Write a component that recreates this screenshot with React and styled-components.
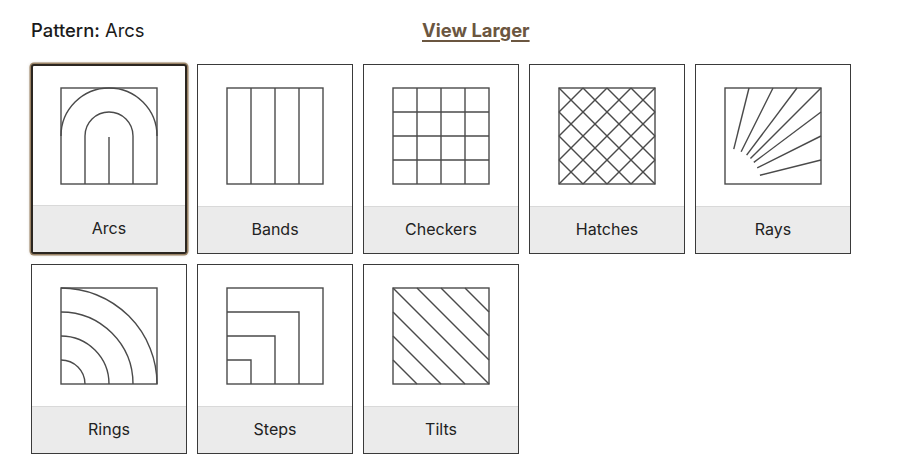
import React from "react";
import styled, { createGlobalStyle, css } from "styled-components";

const Global = createGlobalStyle`
  html, body { margin: 0; padding: 0; background: #fff; }
  body { font-family: Inter, "Noto Sans", "Liberation Sans", sans-serif; color: #1f1f1f; }
`;

const Page = styled.div`
  padding: 0 0 0 31px;
`;

const Header = styled.div`
  display: flex;
  align-items: center;
  height: 58px;
  margin-bottom: 6px;
`;

const Title = styled.div`
  width: 391px;
  font-size: 18.4px;
  color: #1a1a1a;
  padding-top: 1px;
`;

const TitleKey = styled.span`
  font-weight: 500;
`;

const ViewLink = styled.a`
  font-size: 18.4px;
  font-weight: 700;
  color: #6b5640;
  text-decoration: underline;
  text-decoration-thickness: 2px;
  text-underline-offset: 3px;
  cursor: pointer;
  padding-top: 1px;
`;

const Grid = styled.div`
  display: grid;
  grid-template-columns: repeat(5, 156px);
  column-gap: 10px;
  row-gap: 10px;
`;

const Card = styled.div`
  box-sizing: border-box;
  width: 156px;
  height: 190px;
  display: flex;
  flex-direction: column;
  border: 1px solid #3a3a3a;
  background: #fff;
  ${(p) =>
    p.$selected &&
    css`
      border: 2px solid #2b2620;
      border-radius: 3px;
      box-shadow: 0 0 0 1.5px #9a8366, 0 0 3px 1px rgba(120, 95, 60, 0.35);
    `}
`;

const Preview = styled.div`
  flex: 1;
  display: flex;
  align-items: center;
  justify-content: center;
`;

const Label = styled.div`
  box-sizing: border-box;
  height: 47px;
  padding-bottom: 2px;
  border-top: 1px solid #d9d9d9;
  background: #ebebeb;
  display: flex;
  align-items: center;
  justify-content: center;
  font-size: 16px;
  color: #222;
`;

const S = { fill: "none", stroke: "#4a4a4a", strokeWidth: 1.4 };

const Icon = ({ children }) => (
  <svg width="98" height="98" viewBox="-1 -1 98 98">
    <g {...S}>
      {children}
      <rect x="0" y="0" width="96" height="96" />
    </g>
  </svg>
);

const lines = (arr) => arr.map((l, i) => <line key={i} x1={l[0]} y1={l[1]} x2={l[2]} y2={l[3]} />);

const clipLine = (c, dir) => {
  // dir 1: x - y = c ; dir -1: x + y = c, clipped to 0..96
  const pts = [];
  for (let x = 0; x <= 96; x += 0.5) {
    const y = dir === 1 ? x - c : c - x;
    if (y >= 0 && y <= 96) pts.push([x, y]);
  }
  if (pts.length < 2) return null;
  const a = pts[0];
  const b = pts[pts.length - 1];
  return [a[0], a[1], b[0], b[1]];
};

const icons = {
  Arcs: (
    <Icon>
      <path d="M0 48 A48 48 0 0 1 96 48" />
      <path d="M24 96 V48 A24 24 0 0 1 72 48 V96" />
      <line x1="48" y1="49" x2="48" y2="96" />
    </Icon>
  ),
  Bands: <Icon>{lines([[24, 0, 24, 96], [48, 0, 48, 96], [72, 0, 72, 96]])}</Icon>,
  Checkers: (
    <Icon>
      {lines([
        [24, 0, 24, 96], [48, 0, 48, 96], [72, 0, 72, 96],
        [0, 24, 96, 24], [0, 48, 96, 48], [0, 72, 96, 72],
      ])}
    </Icon>
  ),
  Hatches: (
    <Icon>
      {lines(
        [-72, -48, -24, 0, 24, 48, 72]
          .map((c) => clipLine(c, 1))
          .concat([24, 48, 72, 96, 120, 144, 168].map((c) => clipLine(c, -1)))
          .filter(Boolean)
      )}
    </Icon>
  ),
  Rays: (
    <Icon>
      {lines(
        [[24, 0], [48, 0], [72, 0], [96, 0], [96, 24], [96, 48], [96, 72]].map(([x, y]) => {
          const dx = x;
          const dy = y - 96;
          const len = Math.hypot(dx, dy);
          const r = 36;
          return [(dx / len) * r, 96 + (dy / len) * r, x, y];
        })
      )}
    </Icon>
  ),
  Rings: (
    <Icon>
      <path d="M0 72 A24 24 0 0 1 24 96" />
      <path d="M0 48 A48 48 0 0 1 48 96" />
      <path d="M0 24 A72 72 0 0 1 72 96" />
      <path d="M0 0 A96 96 0 0 1 96 96" />
    </Icon>
  ),
  Steps: (
    <Icon>
      <path d="M0 24 H72 V96" />
      <path d="M0 48 H48 V96" />
      <path d="M0 72 H24 V96" />
    </Icon>
  ),
  Tilts: (
    <Icon>
      {lines([-72, -48, -24, 0, 24, 48, 72].map((c) => clipLine(c, 1)).filter(Boolean))}
    </Icon>
  ),
};

const patterns = ["Arcs", "Bands", "Checkers", "Hatches", "Rays", "Rings", "Steps", "Tilts"];

export default function App() {
  const selected = "Arcs";
  return (
    <Page>
      <Global />
      <Header>
        <Title>
          <TitleKey>Pattern:</TitleKey> {selected}
        </Title>
        <ViewLink>View Larger</ViewLink>
      </Header>
      <Grid>
        {patterns.map((p) => (
          <Card key={p} $selected={p === selected}>
            <Preview>{icons[p]}</Preview>
            <Label>{p}</Label>
          </Card>
        ))}
      </Grid>
    </Page>
  );
}
